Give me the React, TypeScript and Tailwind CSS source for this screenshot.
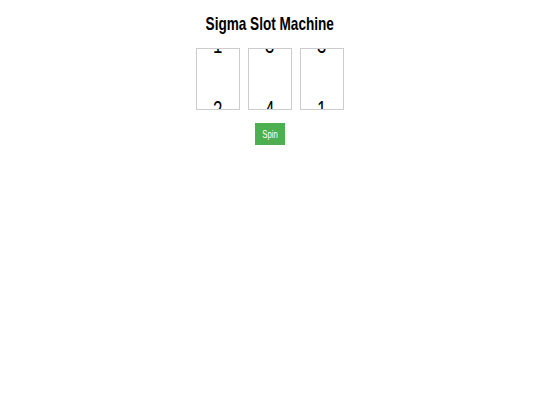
const reels = [
  [1, 2],
  [3, 4],
  [3, 1],
]

export default function App() {
  return (
    <div className="flex flex-col items-center pt-[12px] font-['Liberation_Sans',Arial,sans-serif] text-black">
      <h1 className="text-[19px] font-bold leading-[24px] scale-x-[0.715]">Sigma Slot Machine</h1>
      <div className="mt-[12px] flex gap-[8px]">
        {reels.map((nums, i) => (
          <div key={i} className="w-[44px] h-[62px] border border-[#ccc] overflow-hidden">
            {/* reel strip, stopped halfway between two symbols */}
            <div className="-translate-y-[37px]">
              {nums.map((n, j) => (
                <div key={j} className="h-[65px] flex items-center justify-center text-[24px] leading-none">
                  <span className="scale-x-[0.7]">{n}</span>
                </div>
              ))}
            </div>
          </div>
        ))}
      </div>
      <button className="mt-[13px] w-[30px] h-[22px] bg-[#4caf50] text-white text-[11px] leading-none">
        <span className="inline-block scale-x-[0.7]">Spin</span>
      </button>
    </div>
  )
}
